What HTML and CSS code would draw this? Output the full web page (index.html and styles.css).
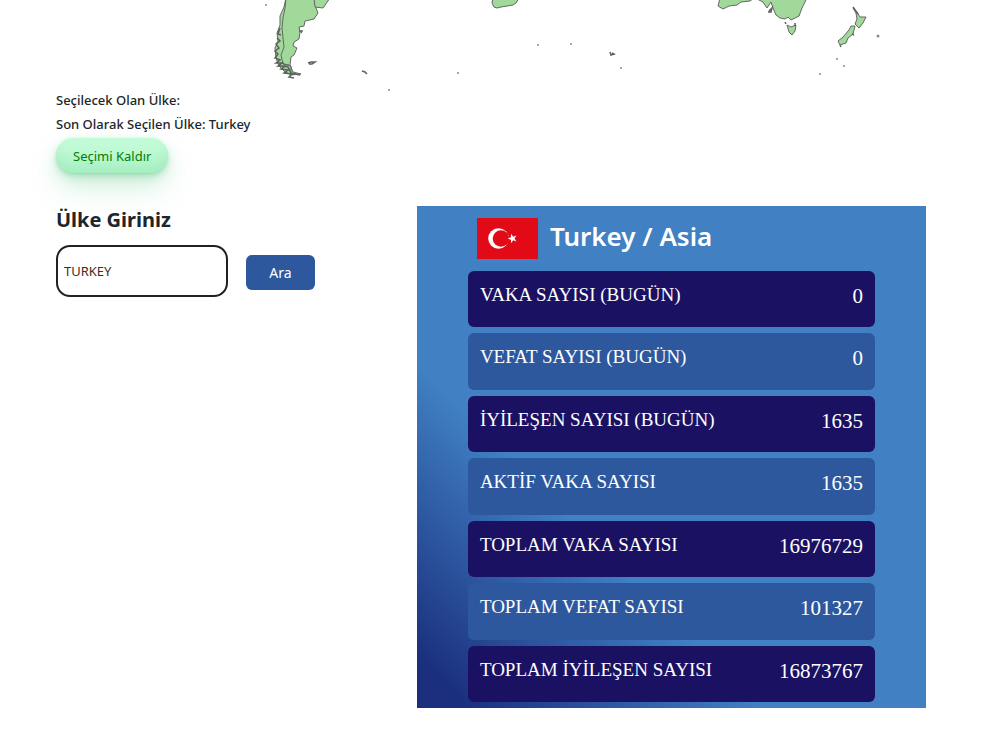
FILE: index.html
```
<!DOCTYPE html>
<html lang="tr">
<head>
    <meta charset="UTF-8">
    <meta name="viewport" content="width=device-width, initial-scale=1.0">
    <title>Covid-19 Ülke Verileri</title>
    <link rel="stylesheet" href="styles.css">
</head>
<body>
    <svg class="map" viewBox="0 0 1000 92" role="img" aria-label="Dünya haritası">
        <g class="land">
            <!-- Güney Amerika -->
            <path d="M286 -2 L284 7 L280 16 L280 25 L277 33 L278 41 L275 48 L276 58 L279 66 L284 71 L291 75 L301 74 L293 72 L290 65 L291 57 L294 55 L297 48 L293 46 L294 42 L299 39 L300 32 L299 27 L304 26 L305 21 L314 19 L318 13 L316 8 L314 -2 Z"/>
            <path d="M314 -2 L315 7 L323 8 L330 -2 Z"/>
            <path class="border" d="M286 -2 L285 8 L283 18 L282 28 L283 38 L284 47 L281 55 L283 64 L289 65 M281 63 L291 66 L291 74"/>
            <!-- Afrika -->
            <path d="M493 -2 L492 3 L494 7 L497 8 L501 7 L507 6 L513 5 L516 3 L519 -2 Z"/>
            <!-- Avustralya -->
            <path d="M720 -2 L718 6 L723 9 L729 6 L737 5 L741 2 L750 1 L754 -2 Z"/>
            <path d="M755 -2 L763 2 L767 8 L771 2 L773 8 L776 15 L780 18 L785 19 L788 17 L791 20 L799 16 L802 8 L807 -2 Z"/>
            <path d="M787 25 L791 27 L796 25 L795 31 L792 35 L789 32 Z"/>
            <!-- Yeni Zelanda -->
            <path d="M853 8 L857 12 L860 17 L866 17 L863 23 L859 28 L855 24 L857 19 L856 13 Z"/>
            <path d="M855 26 L853 34 L848 38 L846 43 L840 45 L838 41 L843 37 L849 30 L851 26 Z"/>
        </g>
        <g class="islands">
            <path d="M280 28 L278 34 L281 35 M277 38 L280 41 L276 44 L279 48 L275 51 L278 54 L275 58 L280 60 L276 63 L282 63 L278 66 L285 66 L281 69 L288 70 L284 73 L292 74 L289 77 L294 78 M284 66 L288 67 L291 73 L300 75"/>
            <path d="M299 31 L302 31 L301 33 M308 63 L311 62 L315 62 L312 64 L309 64 M362 71 L365 72 L367 74"/>
            <path d="M610 52 L611 55 L614 54 L612 53 M769 11 L772 8 L771 12 L768 12 M853 7 L858 14 M785 22 L786 24 M795 23 L795 26 M852 34 L854 35 M840 45 L841 47"/>
        </g>
        <g class="dots">
            <circle cx="266" cy="5" r="1"/>
            <circle cx="389" cy="90" r="1"/>
            <circle cx="458" cy="73" r="1"/>
            <circle cx="538" cy="45" r="1"/>
            <circle cx="571" cy="44" r="1"/>
            <circle cx="621" cy="68" r="1"/>
            <circle cx="878" cy="36" r="1.5"/>
            <circle cx="837" cy="59" r="1"/>
            <circle cx="844" cy="66" r="1"/>
            <circle cx="820" cy="74" r="1"/>
        </g>
    </svg>

    <main class="container">
        <div class="selection">
            <p>Seçilecek Olan Ülke:</p>
            <p>Son Olarak Seçilen Ülke: Turkey</p>
            <button type="button" class="btn-clear">Seçimi Kaldır</button>
        </div>

        <div class="content">
            <form class="search" onsubmit="return false">
                <label for="country">Ülke Giriniz</label>
                <div class="search-row">
                    <input type="text" id="country" value="TURKEY">
                    <button type="submit" class="btn-search">Ara</button>
                </div>
            </form>

            <section class="card">
                <div class="card-title">
                    <svg class="flag" viewBox="0 0 61 41" role="img" aria-label="Türkiye bayrağı">
                        <rect width="61" height="41" fill="#e30a17"/>
                        <circle cx="21.5" cy="20.5" r="10.3" fill="#fff"/>
                        <circle cx="24" cy="20.5" r="8.3" fill="#e30a17"/>
                        <path d="M30.5 20.500 L34 19.300 L34 15.800 L36.200 18.700 L39.500 17.600 L37.500 20.500 L39.500 23.400 L36.200 22.300 L34 25.200 L34 21.700 Z" fill="#fff"/>
                    </svg>
                    <h2>Turkey / Asia</h2>
                </div>
                <dl class="stats">
                    <div class="stat"><dt>VAKA SAYISI (BUGÜN)</dt><dd>0</dd></div>
                    <div class="stat"><dt>VEFAT SAYISI (BUGÜN)</dt><dd>0</dd></div>
                    <div class="stat"><dt>İYİLEŞEN SAYISI (BUGÜN)</dt><dd>1635</dd></div>
                    <div class="stat"><dt>AKTİF VAKA SAYISI</dt><dd>1635</dd></div>
                    <div class="stat"><dt>TOPLAM VAKA SAYISI</dt><dd>16976729</dd></div>
                    <div class="stat"><dt>TOPLAM VEFAT SAYISI</dt><dd>101327</dd></div>
                    <div class="stat"><dt>TOPLAM İYİLEŞEN SAYISI</dt><dd>16873767</dd></div>
                </dl>
            </section>
        </div>
    </main>
</body>
</html>
```
FILE: styles.css
```
* {
    box-sizing: border-box;
}
body {
    margin: 0;
    background: #fff;
    color: #212529;
    font-family: "Noto Sans", "Open Sans", sans-serif;
    font-size: 14px;
}
p, h2, dl, dd {
    margin: 0;
}
.map {
    display: block;
    width: 100%;
}
.land path {
    fill: #a1d99b;
    stroke: #666;
    stroke-width: 1;
    stroke-linejoin: round;
}
.land .border {
    fill: none;
}
.islands path {
    fill: none;
    stroke: #5c625c;
    stroke-width: 1.5;
}
.dots circle {
    fill: #8a8a8a;
}
.container {
    padding: 0 74px 40px 56px;
}
.selection {
    margin-top: -4px;
}
.selection p {
    font-size: 13px;
    font-weight: 500;
    line-height: 24px;
}
.btn-clear {
    display: block;
    height: 35px;
    margin-top: 2px;
    padding: 0 17px;
    border: 0;
    border-radius: 100px;
    background: #c2fbd7;
    box-shadow: rgba(44, 187, 99, .2) 0 -25px 18px -14px inset, rgba(44, 187, 99, .15) 0 1px 2px, rgba(44, 187, 99, .15) 0 2px 4px, rgba(44, 187, 99, .15) 0 4px 8px, rgba(44, 187, 99, .15) 0 8px 16px, rgba(44, 187, 99, .15) 0 16px 32px;
    color: green;
    font-family: inherit;
    font-size: 13px;
    cursor: pointer;
}
.content {
    display: grid;
    grid-template-columns: 361px 1fr;
    align-items: start;
    margin-top: 33px;
}
.search label {
    display: block;
    font-size: 20px;
    font-weight: 700;
    line-height: 28px;
}
.search-row {
    display: flex;
    align-items: center;
    gap: 18px;
    margin-top: 11px;
}
.search input {
    width: 172px;
    height: 52px;
    padding: 0 6px;
    border: 2px solid #212121;
    border-radius: 14px;
    color: #4a2a1c;
    font-family: inherit;
    font-size: 13px;
}
.btn-search {
    width: 69px;
    height: 35px;
    margin-top: 3px;
    border: 0;
    border-radius: 6px;
    background: #2e589e;
    color: #fff;
    font-family: inherit;
    font-size: 14px;
    cursor: pointer;
}
.card {
    padding: 12px 10% 6px;
    background: linear-gradient(45deg, #1b2f7e 5%, #4080c3 34%);
    color: #fff;
}
.card-title {
    display: flex;
    align-items: flex-start;
    gap: 12px;
    padding-left: 9px;
}
.flag {
    width: 61px;
    height: 41px;
}
.card-title h2 {
    font-size: 26px;
    font-weight: 600;
    line-height: 36px;
}
.stats {
    display: grid;
    grid-auto-rows: 1fr;
    gap: 6px;
    min-height: 431px;
    margin-top: 12px;
}
.stat {
    display: flex;
    justify-content: space-between;
    padding: 12px 12px 0;
    border-radius: 6px;
    background: #2e589e;
    font-family: "Liberation Serif", "Times New Roman", serif;
    font-size: 19px;
    line-height: 24px;
}
.stat:nth-child(odd) {
    background: #1b1163;
}
.stat dd {
    font-size: 21px;
    line-height: 26px;
}
```
